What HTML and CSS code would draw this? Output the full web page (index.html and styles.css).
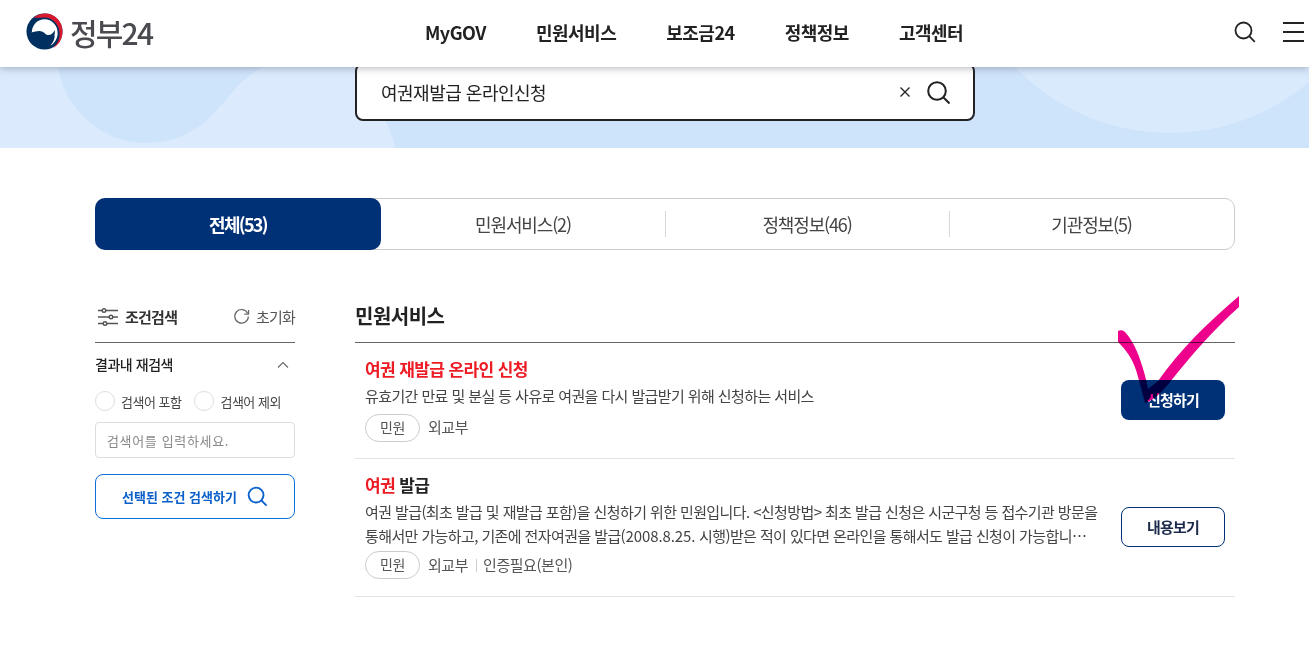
FILE: index.html
```html
<!DOCTYPE html>
<html lang="ko">
<head>
<meta charset="utf-8">
<title>정부24</title>
<link rel="stylesheet" href="styles.css">
</head>
<body>
<header class="topbar">
  <a class="logo">
    <svg class="logo-mark" viewBox="0 0 38 38" width="37" height="37">
      <circle cx="19" cy="19" r="18.500" fill="#00305f"/>
      <path d="M8 5C12 1.500 17 .3 21 .6 30 1.300 37.500 9 37.500 19c0 7.500-3.800 14-10 17.200 4-3.500 7-8.500 7-15.200C34.500 12 27.500 4.500 19 4.500 15 4.500 11.500 4.700 8 5Z" fill="#d9182f"/>
      <path d="M6 19.500C6.500 12 12 6.500 19 6.500c7.500 0 13.500 6 13.500 14 0 5.500-3 10.500-7.500 13 3-3 4.500-7 4.500-10.500-4 3.500-9 3-11.500 0-2.500-3-6-5.500-12.500-3Z" fill="#fff"/>
      <path d="M10 19.500c3.500-2 7.500-.5 9.500 1.500 3 2.800 7.500 2 10-3.500.6 3.500-.5 8-2.500 10.500-3 3.500-8 3.500-11 .5-2-2.500-3-6-6-9Z" fill="#00305f"/>
    </svg>
    <span class="logo-text">정부24</span>
  </a>
  <nav class="gnb">
    <a>MyGOV</a><a>민원서비스</a><a>보조금24</a><a>정책정보</a><a>고객센터</a>
  </nav>
  <div class="util">
    <svg class="ico-search" viewBox="0 0 22 22" width="22" height="22"><circle cx="9.500" cy="9.500" r="8" fill="none" stroke="#222" stroke-width="1.800"/><path d="M15.200 15.200 20.800 20.800" stroke="#222" stroke-width="1.800" fill="none"/></svg>
    <span class="burger"><i></i><i></i><i></i></span>
  </div>
</header>

<section class="hero">
  <svg class="hero-bg" viewBox="0 0 1309 81" width="1309" height="81">
    <rect width="1309" height="81" fill="#dbeafd"/>
    <circle cx="147" cy="-14" r="90" fill="#cee4fb"/>
    <path d="M147 0H263C243 10 233 24 222 38H147Z" fill="#cee4fb"/>
    <path d="M385 53Q392 66 395 81H1309V0H385Z" fill="#cee4fb"/>
    <circle cx="1170" cy="-149" r="215" fill="#d9eafd"/>
  </svg>
  <div class="searchbox">
    <span class="search-value">여권재발급 온라인신청</span>
    <svg class="clear" viewBox="0 0 10 10" width="10" height="10"><path d="M.5.500l9 9M9.500.500l-9 9" stroke="#222" stroke-width="1.300" fill="none"/></svg>
    <svg viewBox="0 0 23 23" width="23" height="23"><circle cx="10" cy="10" r="8.800" fill="none" stroke="#222" stroke-width="2"/><path d="M16.500 16.500 22.500 22.500" stroke="#222" stroke-width="2" fill="none"/></svg>
  </div>
</section>

<main class="content">
  <div class="tabs">
    <a class="tab active">전체(53)</a>
    <a class="tab">민원서비스(2)</a>
    <a class="tab sep">정책정보(46)</a>
    <a class="tab sep">기관정보(5)</a>
  </div>

  <div class="columns">
    <aside class="filter">
      <div class="filter-head">
        <span class="filter-title">
          <svg viewBox="0 0 20 20" width="20" height="20"><g stroke="#555" stroke-width="1.400" fill="none"><path d="M0 3.500H4M8 3.500H20M0 10H11M15 10H20M0 16.500H5M9 16.500H20"/><circle cx="6" cy="3.500" r="1.800"/><circle cx="13" cy="10" r="1.800"/><circle cx="7" cy="16.500" r="1.800"/></g></svg>
          조건검색
        </span>
        <span class="reset">
          <svg viewBox="0 0 18 18" width="17" height="17"><path d="M15.500 5.500A7.200 7.200 0 1 0 16.300 9" fill="none" stroke="#666" stroke-width="1.300"/><path d="M16.500 2V6.500H12" fill="none" stroke="#666" stroke-width="1.300"/></svg>
          초기화
        </span>
      </div>
      <div class="filter-sub">
        <span>결과내 재검색</span>
        <svg viewBox="0 0 12 8" width="12" height="8"><path d="M1 6.500 6 1.500l5 5" fill="none" stroke="#666" stroke-width="1.100"/></svg>
      </div>
      <div class="radios">
        <label class="radio"><i></i>검색어 포함</label>
        <label class="radio"><i></i>검색어 제외</label>
      </div>
      <div class="keyword">검색어를 입력하세요.</div>
      <a class="cond-btn">선택된 조건 검색하기
        <svg viewBox="0 0 22 22" width="21" height="21"><circle cx="9.500" cy="9.500" r="7.800" fill="none" stroke="#0b63ce" stroke-width="2"/><path d="M15 15 20.500 20.500" stroke="#0b63ce" stroke-width="2" fill="none"/></svg>
      </a>
    </aside>

    <section class="results">
      <h2 class="results-title">민원서비스</h2>
      <article class="item">
        <div class="item-body">
          <h3 class="item-title"><em>여권 재발급 온라인 신청</em></h3>
          <p class="item-desc">유효기간 만료 및 분실 등 사유로 여권을 다시 발급받기 위해 신청하는 서비스</p>
          <div class="meta"><span class="chip">민원</span><span>외교부</span></div>
        </div>
        <a class="btn primary">신청하기</a>
      </article>
      <article class="item">
        <div class="item-body">
          <h3 class="item-title"><em>여권</em> 발급</h3>
          <p class="item-desc two-lines">
            <span class="line">여권 발급(최초 발급 및 재발급 포함)을 신청하기 위한 민원입니다. &lt;신청방법&gt; 최초 발급 신청은 시군구청 등 접수기관 방문을</span>
            <span class="line cut">통해서만 가능하고, 기존에 전자여권을 발급<span class="num">(2008.8.25.</span> 시행)받은 적이 있다면 온라인을 통해서도 발급 신청이 가능합니다. 자</span>
          </p>
          <div class="meta"><span class="chip">민원</span><span>외교부</span><span class="bar"></span><span>인증필요(본인)</span></div>
        </div>
        <a class="btn outline">내용보기</a>
      </article>
    </section>
  </div>
</main>

<svg class="checkmark" viewBox="0 0 1309 647" width="1309" height="647">
  <path d="M1118 331C1120 330 1123 330 1125 332C1135 343 1140 358 1144 372C1146 379 1147 384 1148 389L1158 381C1180 350 1205 325 1239 296V307C1213 330 1190 357 1170 382C1162 392 1154 400 1145 403C1142 391 1139 380 1136 370C1132 358 1126 350 1118 342Z" fill="#ec008c"/>
</svg>
</body>
</html>
```
FILE: styles.css
```css
* { box-sizing: border-box; }
html, body { margin: 0; padding: 0; }
body {
  width: 1309px;
  height: 647px;
  overflow: hidden;
  background: #fff;
  color: #222;
  font-family: "Noto Sans CJK KR", "Noto Sans", sans-serif;
  position: relative;
}
a { color: inherit; text-decoration: none; }

.topbar {
  position: relative;
  z-index: 3;
  height: 67px;
  background: #fff;
  box-shadow: 0 1px 8px rgba(60, 60, 80, .38);
  display: flex;
  align-items: center;
  padding: 0 5px 4px 26px;
}
.logo { display: flex; align-items: center; gap: 7px; width: 399px; }
.logo-mark { display: block; }
.logo-text {
  font-size: 30px;
  line-height: 36px;
  font-weight: 500;
  letter-spacing: -1.8px;
  color: #4a4b50;
}
.gnb {
  display: flex;
  gap: 50px;
  font-size: 18px;
  font-weight: 700;
  letter-spacing: -.5px;
  color: #222;
}
.util { margin-left: auto; display: flex; align-items: center; gap: 27px; }
.burger { display: flex; flex-direction: column; gap: 7px; width: 21px; }
.burger i { display: block; height: 2px; background: #222; }

.hero {
  position: relative;
  height: 81px;
  overflow: hidden;
  display: flex;
  align-items: flex-end;
  padding: 0 0 27px 355px;
  background: #cee4fb;
}
.hero-bg { position: absolute; left: 0; top: 0; }
.searchbox {
  position: relative;
  width: 620px;
  height: 58px;
  background: #fff;
  border: 2px solid #222;
  border-radius: 8px;
  display: flex;
  align-items: center;
  padding: 0 23px 0 24px;
}
.search-value { flex: 1; font-size: 18px; letter-spacing: -.5px; color: #222; }
.clear { margin-right: 17px; }

.content { width: 1140px; margin: 50px 0 0 95px; }
.tabs {
  display: grid;
  grid-template-columns: 285px 284px 284px 285px;
  height: 52px;
  border: 1px solid #ccc;
  border-radius: 10px;
  font-size: 18px;
  letter-spacing: -1.15px;
  color: #444;
}
.tab {
  display: flex;
  align-items: center;
  justify-content: center;
  position: relative;
}
.tab.active {
  margin: -1px 0 -1px -1px;
  background: #003075;
  color: #fff;
  font-weight: 700;
  letter-spacing: -1.7px;
  border-radius: 10px;
}
.tab.sep::before {
  content: "";
  position: absolute;
  left: 0;
  top: 12px;
  bottom: 12px;
  width: 1px;
  background: #d9d9d9;
}

.columns { display: flex; gap: 60px; margin-top: 49px; }
.filter { width: 200px; flex: none; }
.filter-head {
  display: flex;
  justify-content: space-between;
  align-items: center;
  height: 44px;
  border-bottom: 1px solid #666;
  padding: 0 0 8px 3px;
}
.filter-title {
  display: flex;
  align-items: center;
  gap: 7px;
  font-size: 15px;
  font-weight: 700;
  letter-spacing: -.75px;
  color: #333;
}
.reset {
  display: flex;
  align-items: center;
  gap: 6px;
  font-size: 15px;
  letter-spacing: -.8px;
  color: #555;
}
.filter-sub {
  display: flex;
  justify-content: space-between;
  align-items: center;
  height: 43px;
  padding: 0 6px 0 0;
  font-size: 14px;
  font-weight: 500;
  letter-spacing: -.45px;
  color: #222;
}
.filter-sub span { padding-bottom: 2px; }
.radios { display: flex; gap: 13px; margin-top: 3px; height: 24px; }
.radio {
  display: flex;
  align-items: center;
  gap: 6px;
  font-size: 13px;
  letter-spacing: -.5px;
  color: #444;
}
.radio i {
  width: 20px;
  height: 20px;
  border: 1px solid #ddd;
  border-radius: 50%;
  background: #fff;
}
.keyword {
  margin-top: 9px;
  height: 36px;
  border: 1px solid #ddd;
  border-radius: 4px;
  display: flex;
  align-items: center;
  padding: 0 11px;
  font-size: 13px;
  letter-spacing: .65px;
  color: #888;
}
.cond-btn {
  margin-top: 16px;
  height: 45px;
  border: 1px solid #0b6fdc;
  border-radius: 8px;
  display: flex;
  align-items: center;
  justify-content: center;
  gap: 10px;
  font-size: 13px;
  font-weight: 700;
  letter-spacing: 0;
  color: #0b5fc8;
}

.results { flex: 1; }
.results-title {
  margin: 0;
  height: 44px;
  border-bottom: 1px solid #666;
  font-size: 20px;
  line-height: 34px;
  font-weight: 700;
  letter-spacing: -.5px;
  color: #222;
}
.item {
  display: flex;
  align-items: center;
  justify-content: space-between;
  border-bottom: 1px solid #e3e3e3;
  padding: 0 10px 1px;
  height: 116px;
}
.item + .item { height: 138px; }
.item-body { width: 735px; margin-bottom: 2px; }
.item-title {
  margin: 0;
  font-size: 17px;
  line-height: 24px;
  font-weight: 700;
  letter-spacing: -.6px;
  color: #222;
}
.item-title em { font-style: normal; color: #ed1c24; }
.item-desc {
  margin: 3px 0 0;
  font-size: 15px;
  line-height: 24px;
  letter-spacing: -.6px;
  color: #444;
}
.line { display: block; white-space: nowrap; }
.line.cut {
  width: 724px;
  overflow: hidden;
  text-overflow: ellipsis;
}
.num { letter-spacing: -.1px; }
.meta {
  display: flex;
  align-items: center;
  gap: 8px;
  margin-top: 6px;
  font-size: 15px;
  letter-spacing: -.45px;
  color: #555;
}
.meta > span { padding-bottom: 2px; }
.meta > .bar { padding-bottom: 0; }
.two-lines + .meta { margin-top: 3px; }
.chip {
  width: 55px;
  height: 28px;
  border: 1px solid #ccc;
  border-radius: 14px;
  display: flex;
  align-items: center;
  justify-content: center;
  font-size: 14px;
  letter-spacing: -.3px;
  color: #555;
}
.bar { width: 1px; height: 13px; background: #ccc; margin-right: -2px; }
.btn {
  width: 104px;
  height: 40px;
  padding-bottom: 2px;
  border-radius: 8px;
  display: flex;
  align-items: center;
  justify-content: center;
  font-size: 15px;
  font-weight: 700;
  letter-spacing: -.75px;
}
.btn.primary { background: #003075; color: #fff; }
.btn.outline { border: 1px solid #003075; color: #1b2a4a; }

.checkmark {
  position: absolute;
  left: 0;
  top: 0;
  z-index: 5;
  mix-blend-mode: multiply;
  pointer-events: none;
}
```
